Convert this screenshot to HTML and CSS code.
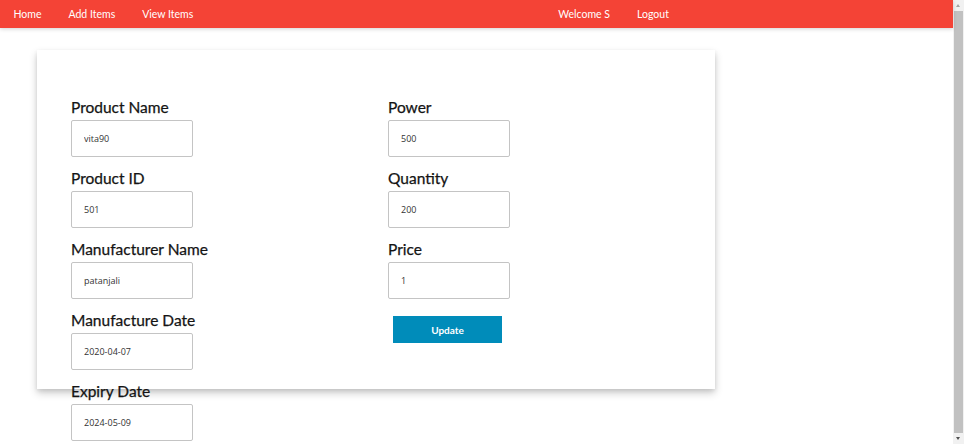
FILE: index.html
```html
<!DOCTYPE html>
<html>
<head>
<meta charset="utf-8">
<link rel="stylesheet" href="styles.css">
</head>
<body>
<div class="page">
  <div class="main">
    <nav class="navbar">
      <ul class="nav-left">
        <li><a href="#">Home</a></li>
        <li><a href="#">Add Items</a></li>
        <li><a href="#">View Items</a></li>
      </ul>
      <ul class="nav-right">
        <li><a href="#">Welcome S</a></li>
        <li><a href="#">Logout</a></li>
      </ul>
    </nav>
    <div class="card">
      <form class="form-grid">
        <div class="col">
          <div class="field"><label>Product Name</label><input type="text" value="vita90"></div>
          <div class="field"><label>Product ID</label><input type="text" value="501"></div>
          <div class="field"><label>Manufacturer Name</label><input type="text" value="patanjali"></div>
          <div class="field"><label>Manufacture Date</label><input type="text" value="2020-04-07"></div>
          <div class="field"><label>Expiry Date</label><input type="text" value="2024-05-09"></div>
        </div>
        <div class="col">
          <div class="field"><label>Power</label><input type="text" value="500"></div>
          <div class="field"><label>Quantity</label><input type="text" value="200"></div>
          <div class="field"><label>Price</label><input type="text" value="1"></div>
          <button type="button" class="btn-update">Update</button>
        </div>
      </form>
    </div>
  </div>
  <div class="scrollbar">
    <div class="sb-arrow sb-up"></div>
    <div class="sb-thumb"></div>
    <div class="sb-arrow sb-down"></div>
  </div>
</div>
</body>
</html>
```
FILE: styles.css
```css
html, body {
  margin: 0;
  padding: 0;
  height: 100%;
  overflow: hidden;
  background: #fff;
}
body {
  font-family: Lato, "Open Sans", sans-serif;
  color: #1a1a1a;
}
.page {
  display: flex;
  height: 444px;
}
.main {
  flex: 1;
  min-width: 0;
}
.navbar {
  height: 28px;
  background: #f44336;
  display: flex;
  align-items: center;
  box-shadow: 0 1px 4px rgba(0,0,0,0.18);
  position: relative;
  z-index: 2;
}
.navbar ul {
  list-style: none;
  margin: 0;
  padding: 0;
  display: flex;
}
.navbar a {
  display: block;
  color: #fff;
  text-decoration: none;
  font-size: 10.5px;
  padding: 0 13.5px;
  line-height: 29px;
}
.navbar .nav-right {
  margin-left: 338px;
}
.card {
  margin: 22px 0 0 37px;
  width: 678px;
  height: 339px;
  box-sizing: border-box;
  padding: 36px 0 0 34px;
  background: #fff;
  box-shadow: 0 4px 8px rgba(0,0,0,0.2), 0 2px 4px rgba(0,0,0,0.08);
  position: relative;
  z-index: 1;
}
.form-grid {
  display: grid;
  grid-template-columns: 317px 317px;
}
.field {
  display: flex;
  flex-direction: column;
  align-items: flex-start;
}
.field label {
  font-size: 15.5px;
  line-height: 22px;
  margin-top: 10px;
  margin-bottom: 2px;
  color: #141414;
  -webkit-text-stroke: 0.25px #141414;
}
.field input {
  width: 122px;
  height: 37px;
  box-sizing: border-box;
  border: 1.5px solid #c4c4c4;
  border-radius: 2px;
  padding: 0 12px;
  font-family: "Open Sans", Lato, sans-serif;
  font-size: 9px;
  color: #333;
  outline: none;
}
.btn-update {
  margin: 17px 0 0 5px;
  width: 109px;
  height: 27px;
  border: none;
  background: #008cba;
  color: #fff;
  font-family: Lato, sans-serif;
  font-weight: bold;
  font-size: 10px;
  padding: 0;
}
.scrollbar {
  width: 11px;
  background: #f1f1f1;
  display: flex;
  flex-direction: column;
  align-items: center;
}
.sb-arrow {
  height: 10px;
  width: 11px;
  position: relative;
}
.sb-up::after, .sb-down::after {
  content: "";
  position: absolute;
  left: 3px;
  border-left: 2.5px solid transparent;
  border-right: 2.5px solid transparent;
}
.sb-up::after {
  top: 4px;
  border-bottom: 3px solid #a3a3a3;
}
.sb-down::after {
  top: 3px;
  border-top: 3px solid #505050;
}
.sb-thumb {
  flex: 1;
  width: 9px;
  background: #c1c1c1;
  margin: 1px 0;
}
```
